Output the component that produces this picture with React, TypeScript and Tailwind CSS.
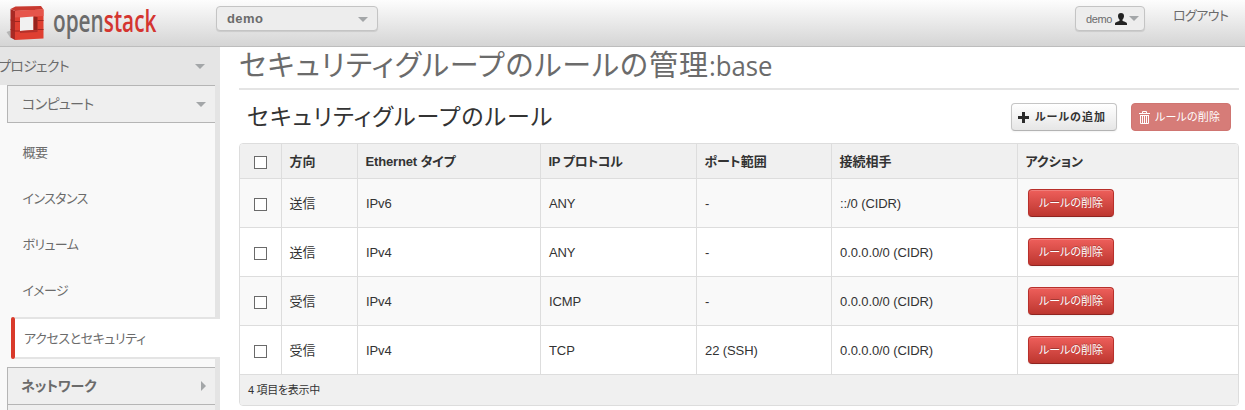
import {cva} from "class-variance-authority";
import clsx from "clsx";

type Rule = {
  direction: string;
  etherType: string;
  protocol: string;
  ports: string;
  remote: string;
};

const rules: Rule[] = [
  {direction: "送信", etherType: "IPv6", protocol: "ANY", ports: "-", remote: "::/0 (CIDR)"},
  {direction: "送信", etherType: "IPv4", protocol: "ANY", ports: "-", remote: "0.0.0.0/0 (CIDR)"},
  {direction: "受信", etherType: "IPv4", protocol: "ICMP", ports: "-", remote: "0.0.0.0/0 (CIDR)"},
  {direction: "受信", etherType: "IPv4", protocol: "TCP", ports: "22 (SSH)", remote: "0.0.0.0/0 (CIDR)"},
];

const headers = [
  {label: "方向", className: "w-[76px]"},
  {label: "Ethernet タイプ", className: "w-[183px] tracking-[-0.15px]"},
  {label: "IP プロトコル", className: "w-[156px] tracking-[-0.4px]"},
  {label: "ポート範囲", className: "w-[135px]"},
  {label: "接続相手", className: "w-[186px]"},
  {label: "アクション", className: "w-[222px]"},
];

const button = cva("flex items-center rounded border whitespace-nowrap text-[11px]", {
  variants: {
    variant: {
      standard:
        "h-7 w-[106px] pl-[6px] gap-[6px] font-bold tracking-[1px] text-[#333] border-[#c5c5c5] border-b-[#b3b3b3] bg-linear-to-b from-white to-[#e6e6e6] shadow-[0_1px_2px_rgba(0,0,0,.05)]",
      disabled: "h-7 w-[100px] pl-[7px] gap-[5px] tracking-[0.2px] text-white border-[#cf7571] bg-[#d67c78]",
      danger:
        "h-7 w-[86px] justify-center text-white border-[#b8302b] border-b-[#8f2420] bg-linear-to-b from-[#ee5f5b] to-[#bd362f] [text-shadow:0_-1px_0_rgba(0,0,0,.25)] shadow-[inset_0_1px_0_rgba(255,255,255,.2),0_1px_2px_rgba(0,0,0,.05)]",
    },
  },
});

const Caret = ({className}: {className?: string}) => (
  <svg width="10" height="5" viewBox="0 0 10 5" className={clsx("shrink-0", className)}>
    <path d="M0 0h10L5 5z" fill="#a3a6a8" />
  </svg>
);

const Logo = () => (
  <div className="flex h-[46px] shrink-0 items-start">
    <svg width="53" height="46" viewBox="0 0 53 46" className="shrink-0">
      <path d="M6.500 32l4-1.500V38z" fill="#b5b5b5" />
      <path d="M10.500 9l4.500 2v29l-4.500-2.500z" fill="#a92a24" />
      <path d="M10.500 9L15.500 6.500 41 6l2.500 3.500L15 11z" fill="#c8392f" />
      <path d="M15 11l28.500-1.500V38.500L15 40z" fill="#df3f31" />
      <path d="M15 11l28.500-1.500V16L15 17.500z" fill="#e6554b" />
      {/* opening and its inner walls */}
      <path d="M20 17.500l13.500-1V30L20 31z" fill="#f1f1f1" />
      <path d="M33.500 16.500l4 .5v13.500l-4-.5z" fill="#96231d" />
      <path d="M20 31l13.500-1 4 .5v1.500L20 33z" fill="#b5302a" />
      <path d="M10.500 20l4.500 1.500h5M10.500 29.500l4.500 1.500h5M37.500 20.500h6M37.500 29.500h6" stroke="#a12720" fill="none" />
    </svg>
    <span className="h-[46px] w-[105px] text-[31px] leading-[41px]">
      <span className="inline-block origin-left scale-x-[.67] font-['Open_Sans'] font-semibold">
        open<span className="text-[#d43530]">stack</span>
      </span>
    </span>
  </div>
);

const UserIcon = () => (
  <svg width="12" height="12" viewBox="0 0 12 12" className="shrink-0">
    <path
      d="M6 0c2 0 3 1.200 3 3 0 1.600-.7 2.800-1.500 3.600v1.200c.5.800 4.500 1 4.500 3V12H0v-1.200c0-2 4-2.200 4.500-3V6.600C3.700 5.800 3 4.600 3 3c0-1.800 1-3 3-3z"
      fill="#222"
    />
  </svg>
);

const PlusIcon = () => (
  <svg width="11" height="11" viewBox="0 0 11 11" className="shrink-0">
    <path d="M4 0h3v4h4v3H7v4H4V7H0V4h4z" fill="#2b2b2b" />
  </svg>
);

const TrashIcon = () => (
  <svg width="11" height="13" viewBox="0 0 11 13" className="shrink-0">
    <path
      d="M3.500 2V.5h4V2M0 2.500h11M1.500 4v8.500h8V4M3.500 4.500V12M5.500 4.500V12M7.500 4.500V12M1 4.500h9"
      stroke="#fff"
      fill="none"
    />
  </svg>
);

const Header = () => (
  <header className="flex h-[47px] items-start border-b border-[#bdbdbd] bg-linear-to-b from-[#fdfdfd] to-[#d5d5d5] text-[#6b6b6b]">
    <Logo />
    <div className="mt-1.5 ml-[58px] flex h-[25px] w-[162px] items-center justify-between rounded border border-[#c4c4c4] bg-[#ededed] pt-px pr-[9px] pl-[10px] text-[13px] font-bold tracking-[0.4px] shadow-[0_1px_1px_rgba(0,0,0,.1)]">
      demo
      <Caret />
    </div>
    <div className="mt-1.5 ml-auto flex h-[25px] w-[70px] items-center rounded border border-[#c4c4c4] bg-[#ededed] pl-[10px] text-[11px] shadow-[0_1px_1px_rgba(0,0,0,.1)]">
      <span className="w-[26px] pt-px tracking-[-0.4px]">demo</span>
      <span className="ml-[3px]">
        <UserIcon />
      </span>
      <Caret className="ml-[2px]" />
    </div>
    <a className="mt-[7px] ml-[28px] w-[72px] text-[13px] leading-[18px] tracking-[-0.6px]">ログアウト</a>
  </header>
);

const navItems = ["概要", "インスタンス", "ボリューム", "イメージ"];

const Sidebar = () => (
  <aside className="flex h-[363px] w-[220px] shrink-0 flex-col bg-[linear-gradient(to_right,#f9f9f9_215px,#e4e4e4_215px)] text-[13px] text-[#6b6b6b]">
    <div className="flex h-[38px] items-center justify-between bg-[#e5e5e5] pr-[15px] text-[14px]">
      <span className="-ml-[2px] tracking-[-0.7px]">プロジェクト</span>
      <Caret />
    </div>
    <div className="mr-[5px] ml-[7px] flex h-[38px] items-center justify-between border border-r-0 border-[#b5b5b5] bg-[#efefef] pr-[9px] pl-[14px] text-[14px]">
      <span className="tracking-[-0.6px]">コンピュート</span>
      <Caret />
    </div>
    <nav className="flex h-[194px] flex-col pt-[7px]">
      {navItems.map((item) => (
        <a key={item} className="flex h-[46px] items-center pl-[22.5px] tracking-[-0.6px]">
          {item}
        </a>
      ))}
    </nav>
    <div className="ml-[11px] flex h-[42px] shrink-0 items-stretch">
      <span className="w-1 rounded-full bg-[#d93a2b]" />
      <a className="flex flex-1 items-center border-y-2 border-[#e4e4e4] bg-white pt-px pl-[9px] tracking-[-0.4px]">
        アクセスとセキュリティ
      </a>
    </div>
    <div className="mt-2 mr-[5px] ml-[7px] flex h-[38px] shrink-0 items-center justify-between border border-r-0 border-[#b5b5b5] bg-[#efefef] pr-[9px] pl-[13px] text-[14px] font-bold">
      <span className="tracking-[-0.2px]">ネットワーク</span>
      <svg width="5" height="10" viewBox="0 0 5 10">
        <path d="M0 0v10l5-5z" fill="#a3a6a8" />
      </svg>
    </div>
    <div className="mr-[5px] ml-[7px] flex-1 border-l border-[#b5b5b5] bg-[#efefef]" />
  </aside>
);

const Checkbox = () => <span className="mx-auto block size-[13px] border border-[#6a6a6a] bg-white" />;

const RulesTable = () => (
  <div className="mt-3 w-[1000px] overflow-hidden rounded-[4px] border border-[#dddddd] text-[13px] text-[#333]">
    <table className="w-[998px] table-fixed border-separate border-spacing-0">
      <thead>
        <tr className="h-[34px] bg-[#f0f0f0] text-left leading-5">
          <th className="w-[41px] p-0 pt-[3px]">
            <Checkbox />
          </th>
          {headers.map((header) => (
            <th key={header.label} className={clsx("border-l border-[#ddd] p-0 pt-px pl-[7.5px]", header.className)}>
              {header.label}
            </th>
          ))}
        </tr>
      </thead>
      <tbody>
        {rules.map((rule, index) => (
          <tr key={index} className="h-[49px] odd:bg-[#f9f9f9] [&>td]:border-t [&>td]:border-[#ddd] [&>td+td]:border-l">
            <td className="p-0 pt-[3px]">
              <Checkbox />
            </td>
            <td className="p-0 pt-px pl-[7.5px]">{rule.direction}</td>
            <td className="p-0 pt-[2px] pl-2 tracking-[-0.1px]">{rule.etherType}</td>
            <td className="p-0 pt-[2px] pl-2 tracking-[-0.1px]">{rule.protocol}</td>
            <td className="p-0 pt-[2px] pl-2 tracking-[-0.1px]">{rule.ports}</td>
            <td className="p-0 pt-[2px] pl-2 tracking-[-0.1px]">{rule.remote}</td>
            <td className="p-0 pl-[10px]">
              <button className={button({variant: "danger"})}>ルールの削除</button>
            </td>
          </tr>
        ))}
      </tbody>
    </table>
    <div className="flex h-[31px] items-center border-t border-[#ddd] bg-[#f0f0f0] pl-2 text-[11px] tracking-[-0.3px]">
      4 項目を表示中
    </div>
  </div>
);

const App = () => (
  <div className="h-[410px] w-[1245px] overflow-hidden bg-white font-['Liberation_Sans','Noto_Sans_CJK_JP',sans-serif] [font-feature-settings:'palt']">
    <Header />
    <div className="flex">
      <Sidebar />
      <main className="ml-[19px] w-[1000px]">
        <h1 className="flex h-[43px] items-start border-b-2 border-[#e4e4e4] text-[29px] leading-[38px] whitespace-nowrap text-[#6b6b6b]">
          <span className="tracking-[0.95px]">セキュリティグループのルールの管理</span>
          <span className="inline-block origin-left scale-x-[.92] font-['Open_Sans'] text-[28px] leading-[37px] font-medium">
            :base
          </span>
        </h1>
        <div className="mt-[13px] flex h-7 items-center">
          <h3 className="ml-2 text-[23px] leading-7 tracking-[1.05px] text-[#333]">セキュリティグループのルール</h3>
          <button className={clsx(button({variant: "standard"}), "ml-auto")}>
            <PlusIcon />
            ルールの追加
          </button>
          <button className={clsx(button({variant: "disabled"}), "mr-2 ml-[14px]")}>
            <TrashIcon />
            ルールの削除
          </button>
        </div>
        <RulesTable />
      </main>
    </div>
  </div>
);

export default App;
